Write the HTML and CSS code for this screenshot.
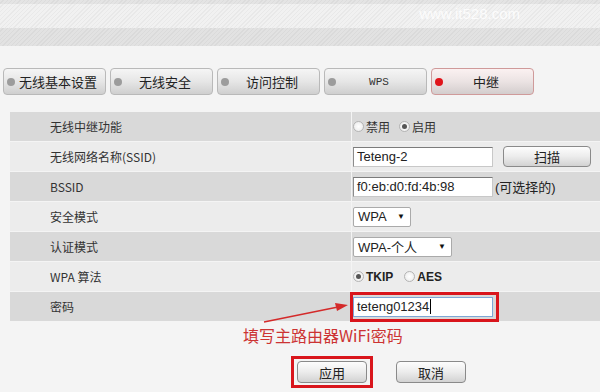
FILE: index.html
```html
<!DOCTYPE html>
<html lang="zh-CN">
<head>
    <meta charset="UTF-8">
    <meta name="viewport" content="width=device-width, initial-scale=1.0">
    <title>无线中继设置</title>
    <link rel="stylesheet" href="styles.css">
</head>
<body>
    <!-- Striped page header -->
    <div class="header">
        <div class="band band-top"></div>
        <div class="band band-mid"><span class="watermark">www.it528.com</span></div>
        <div class="band band-low"></div>
    </div>

    <!-- Wireless tabs -->
    <div class="tabs">
        <div class="tab"><span class="dot"></span><span class="tab-text">无线基本设置</span></div>
        <div class="tab"><span class="dot"></span><span class="tab-text">无线安全</span></div>
        <div class="tab"><span class="dot"></span><span class="tab-text">访问控制</span></div>
        <div class="tab"><span class="dot"></span><span class="tab-text tab-mono">WPS</span></div>
        <div class="tab active"><span class="dot"></span><span class="tab-text">中继</span></div>
    </div>

    <!-- Repeater settings -->
    <div class="settings">
        <div class="row dark">
            <div class="label">无线中继功能</div>
            <div class="value">
                <label class="choice"><span class="radio"></span>禁用</label>
                <label class="choice"><span class="radio checked"></span>启用</label>
            </div>
        </div>
        <div class="row">
            <div class="label">无线网络名称(SSID)</div>
            <div class="value">
                <span class="field">Teteng-2</span>
                <button class="btn btn-scan">扫描</button>
            </div>
        </div>
        <div class="row dark">
            <div class="label">BSSID</div>
            <div class="value">
                <span class="field">f0:eb:d0:fd:4b:98</span>
                <span class="hint">(可选择的)</span>
            </div>
        </div>
        <div class="row">
            <div class="label">安全模式</div>
            <div class="value">
                <span class="select select-sm">WPA<span class="caret">▼</span></span>
            </div>
        </div>
        <div class="row dark">
            <div class="label">认证模式</div>
            <div class="value">
                <span class="select select-md">WPA-个人<span class="caret">▼</span></span>
            </div>
        </div>
        <div class="row">
            <div class="label">WPA 算法</div>
            <div class="value">
                <label class="choice bold"><span class="radio checked"></span>TKIP</label>
                <label class="choice bold"><span class="radio"></span>AES</label>
            </div>
        </div>
        <div class="row dark">
            <div class="label">密码</div>
            <div class="value">
                <span class="mark mark-field"><span class="field focused">teteng01234<span class="cursor"></span></span></span>
            </div>
        </div>
    </div>

    <div class="note">填写主路由器WiFi密码</div>

    <div class="actions">
        <span class="mark mark-btn"><button class="btn btn-action">应用</button></span>
        <button class="btn btn-action">取消</button>
    </div>

    <!-- Annotation arrow -->
    <svg class="arrow" width="600" height="392" viewBox="0 0 600 392">
        <line x1="264" y1="322" x2="338" y2="307" stroke="#d42a2a" stroke-width="1.5"/>
        <polygon points="348,305 335,303 337,311" fill="#d42a2a"/>
    </svg>
</body>
</html>
```

FILE: styles.css
```css
* {
    margin: 0;
    padding: 0;
    box-sizing: border-box;
}

body {
    background-color: #f4f4f4;
    font-family: 'Liberation Sans', 'Noto Sans CJK SC', sans-serif;
    font-size: 12px;
    color: #333;
    width: 600px;
    height: 392px;
    overflow: hidden;
    position: relative;
}

/* Header */
.header {
    height: 46px;
}

.band {
    background-image: repeating-linear-gradient(135deg, rgba(0, 0, 0, 0) 0 2px, rgba(0, 0, 0, 0.035) 2px 3px);
}

.band-top {
    height: 4px;
    background-color: #e4e4e4;
}

.band-mid {
    height: 24px;
    background-color: #f1f1f1;
    padding-top: 1px;
    padding-right: 80px;
    text-align: right;
}

.band-low {
    height: 18px;
    background-color: #e2e2e2;
}

.watermark {
    font-size: 15px;
    line-height: 17px;
    color: rgba(255, 255, 255, 0.85);
}

/* Tabs */
.tabs {
    display: flex;
    gap: 4px;
    padding-left: 3px;
    margin-top: 22px;
}

.tab {
    width: 103px;
    height: 27px;
    display: flex;
    align-items: center;
    border: 1px solid #b9b9b9;
    border-radius: 4px;
    background: linear-gradient(#f5f5f5, #e6e6e6 50%, #cfcfcf);
}

.tab.active {
    border-color: #cf9a9a;
    background: linear-gradient(#fbf1f1, #ebe3e3 50%, #d3cdcd);
}

.dot {
    width: 8px;
    height: 8px;
    border-radius: 50%;
    background-color: #9c9c9c;
    margin-left: 3px;
}

.tab.active .dot {
    background-color: #e0141a;
}

.tab-text {
    flex: 1;
    text-align: center;
    margin-right: 4px;
    font-family: 'Noto Sans CJK SC', sans-serif;
    font-size: 13px;
    color: #222;
}

.tab-mono {
    font-family: 'Liberation Mono', monospace;
    font-size: 11px;
    color: #333;
}

/* Settings table */
.settings {
    margin-top: 17px;
    margin-left: 10px;
    display: flex;
    flex-direction: column;
    gap: 1px;
}

.row {
    height: 29px;
    display: grid;
    grid-template-columns: 341px 1fr;
    column-gap: 1px;
}

.label,
.value {
    background-color: #ececec;
    display: flex;
    align-items: center;
}

.row.dark .label,
.row.dark .value {
    background-color: #d9d9d9;
}

.label {
    padding-left: 40px;
    font-family: 'Noto Sans CJK SC', sans-serif;
    font-size: 12px;
    color: #333;
}

.value {
    padding-left: 1px;
}

.choice {
    display: flex;
    align-items: center;
    font-family: 'Noto Sans CJK SC', sans-serif;
    font-size: 12px;
    margin-right: 9px;
}

.choice.bold {
    font-family: 'Liberation Sans', sans-serif;
    font-weight: bold;
    font-size: 12px;
    color: #222;
    margin-right: 11px;
}

.radio {
    width: 11px;
    height: 11px;
    border-radius: 50%;
    border: 1px solid #b4b4b4;
    background: radial-gradient(#ffffff, #e8e8e8);
    margin-right: 2px;
    display: flex;
    align-items: center;
    justify-content: center;
}

.radio.checked::after {
    content: "";
    width: 5px;
    height: 5px;
    border-radius: 50%;
    background-color: #555;
}

.field {
    width: 140px;
    height: 20px;
    display: flex;
    align-items: center;
    padding-left: 3px;
    background-color: #fff;
    border: 1px solid #c8c8c8;
    border-top-color: #7b7b7b;
    border-left-color: #8c8c8c;
    font-size: 13px;
    color: #222;
}

.field.focused {
    border: 1px solid #7ea7d6;
}

.cursor {
    width: 1px;
    height: 15px;
    background-color: #000;
    margin-left: 1px;
}

.hint {
    margin-left: 2px;
    font-family: 'Liberation Sans', 'Noto Sans CJK SC', sans-serif;
    font-size: 13px;
    color: #222;
}

.select {
    height: 20px;
    display: flex;
    align-items: center;
    justify-content: space-between;
    padding: 0 5px 0 4px;
    background-color: #fff;
    border: 1px solid #aaa;
    border-radius: 2px;
    font-family: 'Liberation Sans', 'Noto Sans CJK SC', sans-serif;
    font-size: 13px;
    color: #222;
}

.select-sm {
    width: 58px;
}

.select-md {
    width: 99px;
}

.caret {
    font-size: 8px;
    color: #111;
}

/* Buttons */
.btn {
    border: 1px solid #8a8a8a;
    border-radius: 4px;
    background: linear-gradient(#fdfdfd, #ececec 50%, #d2d2d2);
    font-family: 'Noto Sans CJK SC', sans-serif;
    font-size: 13px;
    color: #222;
    height: 21px;
}

.btn-scan {
    width: 88px;
    margin-left: 10px;
}

.btn-action {
    width: 70px;
    height: 22px;
}

/* Red annotation marks */
.mark {
    border: 3px solid #d9151c;
    display: flex;
}

.mark-field {
    padding: 2px 3px 2px 0;
    margin-top: -1px;
    margin-bottom: -1px;
    margin-left: -3px;
}

.mark-btn {
    padding: 2px 3px;
}

.note {
    margin-top: 4px;
    padding-left: 243px;
    font-family: 'Noto Sans CJK SC', sans-serif;
    font-size: 16px;
    line-height: 20px;
    color: #cc3333;
}

.actions {
    display: flex;
    align-items: center;
    gap: 23px;
    padding-left: 291px;
    margin-top: 11px;
}

.arrow {
    position: absolute;
    top: 0;
    left: 0;
    pointer-events: none;
}
```
